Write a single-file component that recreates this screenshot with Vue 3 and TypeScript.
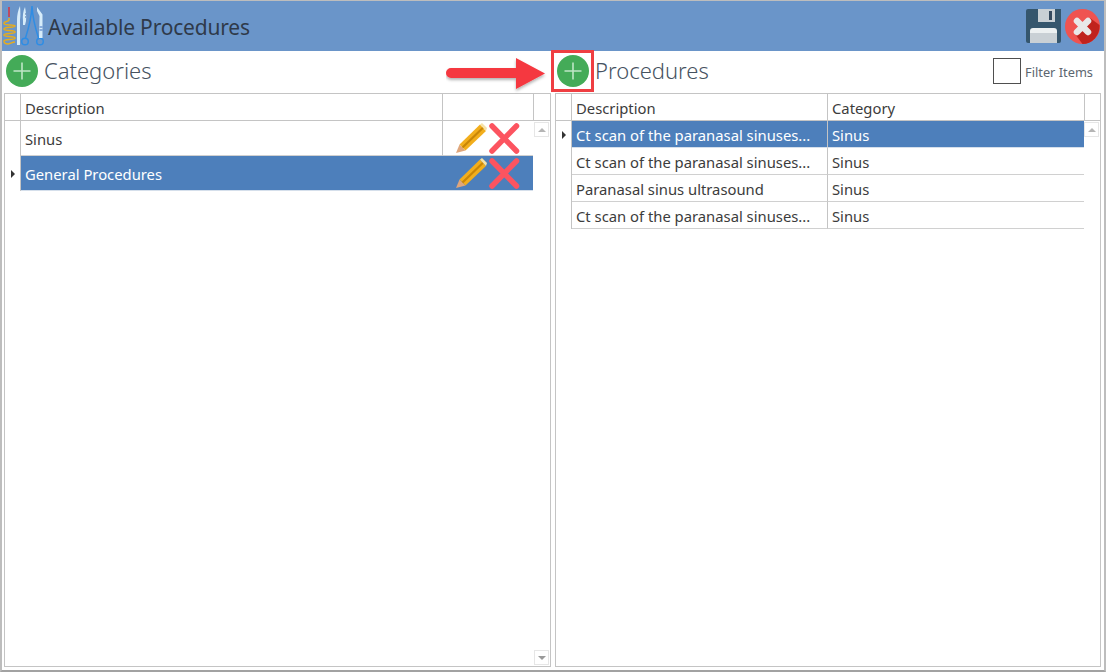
<script setup lang="ts">
const categories = [
  { name: 'Sinus', selected: false },
  { name: 'General Procedures', selected: true },
]
const procedures = [
  { d: 'Ct scan of the paranasal sinuses...', c: 'Sinus', selected: true },
  { d: 'Ct scan of the paranasal sinuses...', c: 'Sinus', selected: false },
  { d: 'Paranasal sinus ultrasound', c: 'Sinus', selected: false },
  { d: 'Ct scan of the paranasal sinuses...', c: 'Sinus', selected: false },
]
</script>

<template>
  <div class="window">
    <header class="titlebar">
      <svg class="logo" width="44" height="46" viewBox="2 3 44 46">
        <path d="M9 7v10" stroke="#d8343f" stroke-width="1.500" fill="none" />
        <path d="M9 18v2c0 2-5 1-5 3.500s11 .5 11 2.500-11 .5-11 3 11 .5 11 3-11 .5-11 3 11 .5 11 3-11 .5-11 3 2 3 4 3 4-2 7-2" stroke="#e8ad1c" stroke-width="1.500" fill="none" />
        <path d="M17 45V20c0-5 1-10 3-14 .5 5 .5 10 0 14v25z" fill="#d6ecfa" />
        <path d="M23 21c-.5-5 0-10 2-14 1 5 1.500 10 1 14l-1 4h-2z" fill="#d6ecfa" />
        <path d="M25 14h1M25 17h1" stroke="#4d6f9f" stroke-width="1" />
        <path d="M32 6c-.5 11-3 21-6.500 32M32 6c.5 11 3 21 6.500 32" stroke="#2f8de4" stroke-width="1.500" fill="none" />
        <circle cx="25" cy="41.500" r="3.300" stroke="#2f8de4" stroke-width="1.500" fill="none" />
        <circle cx="40" cy="41.500" r="3.300" stroke="#2f8de4" stroke-width="1.500" fill="none" />
        <path d="M37 7l5.500 7.500V38h-3.500l.5-22-2.500-5z" fill="#d6ecfa" />
        <path d="M39.500 27h3M39.500 30h3" stroke="#3f6fc0" stroke-width="1" />
      </svg>
      <h1>Available Procedures</h1>
      <span class="spacer"></span>
      <svg class="save" width="35" height="34" viewBox="0 0 35 34">
        <path d="M2 0h33v32a2 2 0 0 1-2 2H2a2 2 0 0 1-2-2V2a2 2 0 0 1 2-2z" fill="#35566d" />
        <rect x="12" y="0" width="17" height="13" fill="#c9d0d5" />
        <rect x="23" y="2" width="3" height="9" fill="#34495e" />
        <path d="M4 22a3 3 0 0 1 3-3h21a3 3 0 0 1 3 3v12H4z" fill="#ecf0f1" />
        <rect x="4" y="24" width="27" height="10" fill="#c9d0d5" />
      </svg>
      <svg class="close" width="35" height="35" viewBox="0 0 35 35">
        <circle cx="17.500" cy="17.500" r="17.500" fill="#ef5350" />
        <path d="M10 25L25 9l9.500 7a17.500 17.500 0 0 1-17 19z" fill="#c0231d" />
        <path d="M12 12l11 11M23 12L12 23" stroke="#e8e8e8" stroke-width="6.500" stroke-linecap="round" />
      </svg>
    </header>

    <main class="panes">
      <section class="pane left">
        <div class="toolbar">
          <span class="add">
            <svg width="32" height="32" viewBox="0 0 32 32">
              <circle cx="16" cy="16" r="16" fill="#44ab58" />
              <path d="M16 7.500v17M7.500 16h17" stroke="#bfe6c6" stroke-width="1.600" />
            </svg>
          </span>
          <h2>Categories</h2>
        </div>
        <div class="grid">
          <div class="head">
            <div class="ind"></div>
            <div class="cell c-desc-l">Description</div>
            <div class="cell c-act"></div>
            <div class="sb-head"></div>
          </div>
          <div class="body">
            <div class="rows">
              <div v-for="cat in categories" :key="cat.name" class="row tall" :class="{ sel: cat.selected }">
                <div class="ind"><i v-if="cat.selected" class="caret"></i></div>
                <div class="cell c-desc-l">{{ cat.name }}</div>
                <div class="cell c-act icons">
                  <svg width="31" height="31" viewBox="0 0 31 31">
                    <path d="M0 30l3.500-8.500 6 6z" fill="#dfa67c" />
                    <path d="M3.500 21.500L24 1.500 30 8 9.500 27.500z" fill="#f2ae1c" />
                    <path d="M6.500 24.500L27 4.700" stroke="#c98607" stroke-width="2.200" />
                    <path d="M24 1.500L26 0l5 5-1 3z" fill="#f6e2a8" />
                  </svg>
                  <svg width="31" height="31" viewBox="0 0 31 31">
                    <path d="M3 3l24.500 25M27.500 3L3 28" stroke="#fc5460" stroke-width="5.500" stroke-linecap="round" />
                  </svg>
                </div>
              </div>
            </div>
            <div class="scroll">
              <span class="btn"><i class="up"></i></span>
              <span class="btn"><i class="down"></i></span>
            </div>
          </div>
        </div>
      </section>

      <section class="pane right">
        <div class="toolbar">
          <span class="add">
            <svg width="32" height="32" viewBox="0 0 32 32">
              <circle cx="16" cy="16" r="16" fill="#44ab58" />
              <path d="M16 7.500v17M7.500 16h17" stroke="#bfe6c6" stroke-width="1.600" />
            </svg>
          </span>
          <h2>Procedures</h2>
          <span class="spacer"></span>
          <span class="check"></span>
          <span class="filter">Filter Items</span>
        </div>
        <div class="grid">
          <div class="head">
            <div class="ind"></div>
            <div class="cell c-desc-r">Description</div>
            <div class="cell c-cat">Category</div>
            <div class="sb-head"></div>
          </div>
          <div class="body">
            <div class="rows">
              <div v-for="(p, i) in procedures" :key="i" class="row lined" :class="{ sel: p.selected }">
                <div class="ind"><i v-if="p.selected" class="caret"></i></div>
                <div class="cell c-desc-r">{{ p.d }}</div>
                <div class="cell c-cat">{{ p.c }}</div>
              </div>
            </div>
            <div class="scroll">
              <span class="btn"><i class="up"></i></span>
            </div>
          </div>
        </div>
      </section>
    </main>

    <div class="callout">
      <svg width="105" height="40" viewBox="0 0 105 40">
        <defs>
          <filter id="sh" x="-10%" y="-20%" width="120%" height="150%">
            <feDropShadow dx="0" dy="2" stdDeviation="1.500" flood-color="#000" flood-opacity="0.3" />
          </filter>
        </defs>
        <path d="M5 13h65V3l29 15.500L70 34V23H5a5 5 0 0 1 0-10z" fill="#f5383f" filter="url(#sh)" />
      </svg>
      <span class="redbox"></span>
    </div>
  </div>
</template>

<style>
html, body { margin: 0; background: #fff; }
</style>

<style scoped>
.window {
  position: relative;
  width: 1106px;
  height: 672px;
  box-sizing: border-box;
  border-style: solid;
  border-color: #bdbdbd #bdbdbd #a2a2a2 #bdbdbd;
  border-width: 1px 2px 2px 2px;
  background: #fff;
  font-family: "Noto Sans", "Open Sans", sans-serif;
  color: #3c3c3c;
  display: flex;
  flex-direction: column;
  overflow: hidden;
}
.titlebar {
  height: 50px;
  flex: none;
  background: #6a95c9;
  display: flex;
  align-items: center;
  padding-right: 4px;
}
.logo { flex: none; }
.titlebar h1 {
  margin: 2px 0 0 2px;
  font-size: 21px;
  letter-spacing: -0.2px;
  font-weight: 400;
  color: #2f3a4a;
  white-space: nowrap;
}
.spacer { flex: 1; }
.save { margin-right: 4px; flex: none; }
.close { flex: none; }
.panes {
  flex: 1;
  display: flex;
  gap: 4px;
  padding: 0 3px 3px 2px;
  min-height: 0;
}
.pane { display: flex; flex-direction: column; min-width: 0; }
.pane.left { width: 547px; flex: none; }
.pane.right { flex: 1; }
.toolbar {
  height: 42px;
  flex: none;
  display: flex;
  align-items: center;
}
.add { display: flex; margin: 0 0 2px 2px; }
.toolbar h2 {
  margin: 0 0 4px 6px;
  font-size: 22px;
  font-weight: 300;
  color: #46525f;
}
.check {
  width: 26px;
  height: 24px;
  margin-bottom: 2px;
  border: 1px solid #4f4f4f;
  background: #fff;
}
.filter { font-size: 12.800px; color: #5c6670; margin: 0 8px 1px 4px; }
.grid {
  flex: 1;
  min-height: 0;
  border: 1px solid #c4c4c4;
  display: flex;
  flex-direction: column;
  font-size: 14.800px;
}
.head {
  height: 26px;
  flex: none;
  display: flex;
  border-bottom: 1px solid #c4c4c4;
}
.head .cell { border-right: 1px solid #c4c4c4; }
.sb-head { flex: 1; }
.ind {
  width: 15px;
  flex: none;
  display: flex;
  align-items: center;
  justify-content: center;
  border-right: 1px solid #c4c4c4;
}
.cell {
  flex: none;
  box-sizing: border-box;
  padding: 2px 0 0 4px;
  display: flex;
  align-items: center;
  white-space: nowrap;
  overflow: hidden;
}
.c-desc-l { width: 422px; }
.c-act { width: 91px; }
.c-desc-r { width: 256px; }
.c-cat { width: 257px; }
.body { flex: 1; min-height: 0; display: flex; }
.rows { flex: 1; min-width: 0; }
.row { display: flex; }
.row.tall { height: 35px; }
.row.lined { height: 27px; }
.row .cell { border-bottom: 1px solid #d0d0d0; }
.row .c-act { width: 90px; }
.row .c-cat { width: 256px; }
.row.tall .c-desc-l, .row.lined .c-desc-r { border-right: 1px solid #c4c4c4; }
.row.tall.sel .c-desc-l { border-right: none; }
.row.sel .cell { background: #4d7fbb; color: #fff; border-bottom-color: #d5dfeb; }
.row .icons { padding: 0 0 0 13px; gap: 2px; }
.caret {
  display: block;
  width: 0;
  height: 0;
  border-left: 4px solid #333;
  border-top: 4px solid transparent;
  border-bottom: 4px solid transparent;
}
.scroll {
  width: 17px;
  flex: none;
  display: flex;
  flex-direction: column;
  justify-content: space-between;
  align-items: center;
  padding: 1px 0 1px;
}
.btn {
  width: 13px;
  height: 13px;
  border: 1px solid #e6e6e6;
  display: flex;
  align-items: center;
  justify-content: center;
}
.up { width: 0; height: 0; border: 4px solid transparent; border-top: none; border-bottom: 4px solid #b5b5b5; }
.down { width: 0; height: 0; border: 4px solid transparent; border-bottom: none; border-top: 4px solid #9a9a9a; }
.callout {
  position: absolute;
  left: 444px;
  top: 49px;
  display: flex;
  align-items: flex-start;
}
.callout svg { margin-top: 5px; }
.redbox {
  display: block;
  width: 37px;
  height: 36px;
  border: 3px solid #ef3e42;
}
</style>
